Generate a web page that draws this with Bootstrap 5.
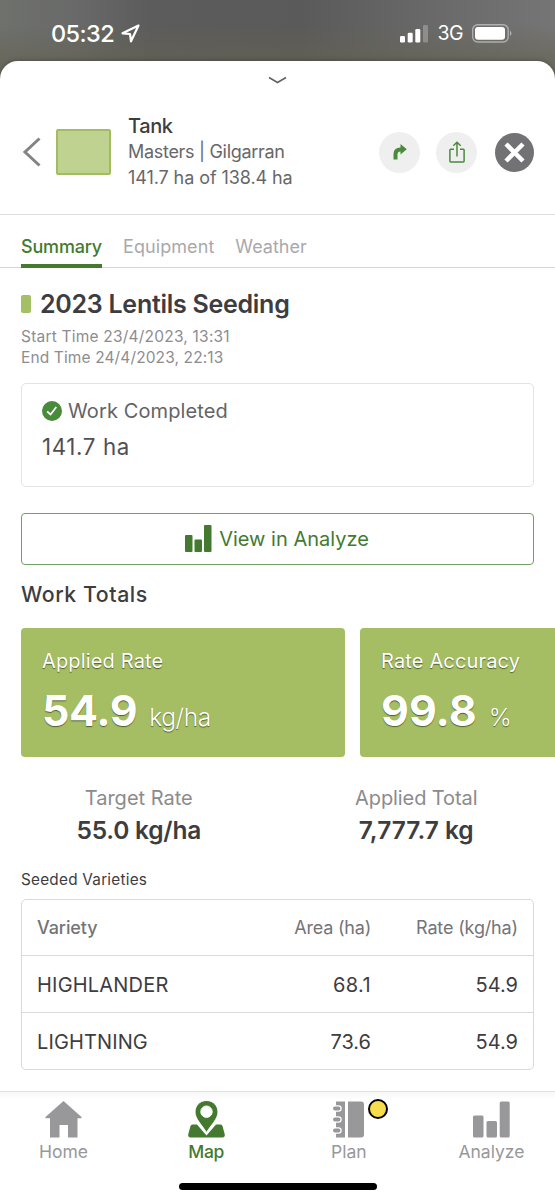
<!DOCTYPE html>
<html lang="en">
<head>
<meta charset="utf-8">
<meta name="viewport" content="width=device-width, initial-scale=1">
<title>Tank</title>
<link href="https://cdn.jsdelivr.net/npm/bootstrap@5.3.0/dist/css/bootstrap.min.css" rel="stylesheet">
<style>
body{font-family:Inter,"Liberation Sans",sans-serif;height:1200px;overflow:hidden;color:#3d3d3f;
background:linear-gradient(180deg,transparent 25px,rgba(100,98,82,.55) 58px),linear-gradient(90deg,#6f716d 0,#696a69 70px,#5c5c5c 150px,#5a5a5a 300px,#6a6a6a 440px,#757575 555px)}
svg{display:block;flex:none}
.t{white-space:nowrap;display:inline-block}
.statusbar{height:61px;padding:6px 42px 0 51px;color:#fff}
.clock{font-size:23.5px;font-weight:500;letter-spacing:-.6px}
.sheet{height:1139px;border-radius:18px 18px 0 0;box-shadow:0 0 5px rgba(0,0,0,.3)}
.grab{height:38px;padding-top:15px}
.head{height:116px;padding:14px 21px 23px 22px;border-bottom:1px solid #dedee0}
.field{width:55px;height:46px;margin-left:15px;background:#bfd290;border:2px solid #a2bd5f;border-radius:2px}
.info{font-size:18px;line-height:26px;color:#67676a;margin-left:17px}
.rnd{width:41px;height:41px;border-radius:50%;background:#efefef}
.tabs{height:53px;padding-left:21px;gap:21px;border-bottom:1px solid #d6d6d8;font-size:18px;color:#a9a9ab}
.tabs>div{height:53px;line-height:63px}
.tabs>.on{color:#437a30;border-bottom:4px solid #437a30;font-weight:500}
.title{font-size:25px;line-height:30px;height:30px;font-weight:600;letter-spacing:-.27px}
.chip{width:10px;height:18px;border-radius:2px;background:#a4bf64}
.times{font-size:15.5px;line-height:21px;color:#8d8d90;margin-top:6.5px}
.done{height:104px;border:1.5px solid #e3e3e5;border-radius:5px;padding:13px 20px;margin-top:15px}
.done-head{height:28px;font-size:20px;color:#636366;letter-spacing:.12px}
.done-val{font-size:22.3px;line-height:28px;margin-top:8px;color:#505053;letter-spacing:.65px}
.go{height:52px;border:1px solid #6fa35f;border-radius:4px;color:#437a30;font-size:20px;margin-top:26px;padding-right:1px}
.totals{font-size:21.3px;line-height:28px;margin-top:15px;font-weight:500;letter-spacing:.55px}
.tiles{margin-top:20px;gap:15px;width:534px;overflow:hidden}
.tile{height:129px;width:324px;flex:none;background:#a5be63;border-radius:4px;color:#fff;padding:20px 21px;text-shadow:0 1px 1px rgba(60,70,30,.8)}
.tile-h{font-size:20px;line-height:26px;letter-spacing:.15px}
.tile-v{line-height:52px;margin-top:10px}
.big{font-size:43px;font-weight:700;letter-spacing:-.4px}
.unit{font-size:24.5px;font-weight:300;letter-spacing:-.4px;margin-left:12px}
.k{font-size:20px;line-height:28px;color:#8b8b8e}
.v{font-size:24.5px;line-height:32px;margin-top:2px;font-weight:600}
.seeded{font-size:15.3px;line-height:22px;letter-spacing:.24px}
.vt{border:1px solid #d9d9db;border-radius:5px;height:171px;margin-top:8px}
.vt>div{height:57px;border-bottom:1px solid #d9d9db;padding:2px 15px 0;font-size:20px}
.vt>div:last-child{border:0}
.vt>.hd{font-size:18px;color:#747477;height:56px;padding-top:1px}
.last-col{width:147px}
.foot{height:109px;border-top:1px solid #e2e2e2;background:linear-gradient(#f7f7f7,#fff 8px);padding:0 13.5px}
.foot .it{width:100px;padding-top:9px;font-size:17.5px;color:#98989a;position:relative}
.foot .on{color:#437a30}
.lab{line-height:22px;margin-top:3px}
.dot{position:absolute;left:69px;top:6.5px;width:20px;height:20px;border-radius:50%;background:#f8dc4c;border:2.5px solid #000}
.homebar{width:198px;height:6.5px;border-radius:4px;background:#000;margin:20px auto 0}
</style>
</head>
<body>
<div class="statusbar d-flex align-items-center">
<span class="t clock">05:32</span>
<svg style="margin-left:7px" width="19" height="19" viewBox="0 0 19 19" fill="none" stroke="#fff" stroke-width="2.2" stroke-linejoin="round"><path d="M17.500 1.500L1.500 9.300L9 10L10 17.300Z"/></svg>
<svg class="ms-auto" width="29" height="18" viewBox="0 0 29 18" fill="#fff"><rect x="0" y="11" width="5" height="6.500" rx="1.300"/><rect x="7.700" y="7.800" width="5" height="9.700" rx="1.300"/><rect x="15.300" y="4" width="5" height="13.500" rx="1.300"/><rect x="23" y="0" width="5" height="17.500" rx="1.300" opacity=".25"/></svg>
<span class="t" style="font-size:19.5px;margin-left:9px;letter-spacing:-.6px;padding-top:1px">3G</span>
<svg style="margin-left:9px" width="41" height="19" viewBox="0 0 41 19"><rect x=".7" y=".7" width="35.500" height="17.300" rx="5" fill="none" stroke="#fff" stroke-opacity=".45" stroke-width="1.400"/><rect x="3" y="3" width="30" height="12.700" rx="3" fill="#fff"/><path d="M38 6.500a3.500 3.500 0 0 1 0 5.500Z" fill="#fff" opacity=".5"/></svg>
</div>
<main class="sheet bg-white d-flex flex-column">
<div class="grab d-flex justify-content-center"><svg width="19" height="9" viewBox="0 0 19 9" fill="none" stroke="#636363" stroke-width="1.700"><path d="M1 1.500L9.500 6.500L18 1.500"/></svg></div>
<header class="head d-flex align-items-center">
<svg width="19" height="30" viewBox="0 0 19 30" fill="none" stroke="#848484" stroke-width="3"><path d="M17.500 1.500L3 15L17.500 28.500"/></svg>
<div class="field"></div>
<div class="info d-flex flex-column align-items-start">
<span class="t" style="font-size:20px;color:#3d3d3f;font-weight:500;letter-spacing:-.4px">Tank</span>
<span class="t" style="letter-spacing:-.3px">Masters | Gilgarran</span>
<span class="t" style="letter-spacing:-.08px">141.7 ha of 138.4 ha</span></div>
<div class="rnd ms-auto d-flex align-items-center justify-content-center"><svg width="14" height="16" viewBox="0 0 14 16" fill="#4a8a3c"><path d="M.5 15.500V10Q.5 3.500 7.500 3.500V0L13.800 5.300L7.500 10.500V7.500Q4.500 7.500 4.500 10.500V15.500Z"/></svg></div>
<div class="rnd d-flex align-items-center justify-content-center" style="margin-left:16px"><svg width="16" height="22" viewBox="0 0 16 22" fill="none" stroke="#4a8a3c" stroke-width="1.500"><path d="M5 8.300H1.700Q.9 8.300 .9 9.100V20Q.9 20.900 1.700 20.900H14.300Q15.100 20.900 15.100 20V9.100Q15.100 8.300 14.300 8.300H11M8 15.500V1.500M4.300 4.800L8 1.300L11.700 4.800"/></svg></div>
<svg style="margin-left:18px" width="39" height="39" viewBox="0 0 39 39"><circle cx="19.500" cy="19.500" r="19.500" fill="#727274"/><path d="M11 11L28 28M28 11L11 28" stroke="#fff" stroke-width="4.500"/></svg>
</header>
<nav class="tabs d-flex"><div class="on"><span class="t" style="letter-spacing:-.17px">Summary</span></div><div><span class="t" style="letter-spacing:.07px">Equipment</span></div><div><span class="t">Weather</span></div></nav>
<section style="padding:21px 21px 0">
<div class="title d-flex align-items-center"><span class="chip"></span><span class="t" style="margin-left:9px">2023 Lentils Seeding</span></div>
<div class="times d-flex flex-column align-items-start"><span class="t" style="letter-spacing:.21px">Start Time 23/4/2023, 13:31</span><span class="t" style="letter-spacing:.12px">End Time 24/4/2023, 22:13</span></div>
<div class="done">
<div class="done-head d-flex align-items-center"><svg width="20" height="20" viewBox="0 0 20 20"><circle cx="10" cy="10" r="10" fill="#4a8a3c"/><path d="M5.200 10.500L8.600 13.500L14.300 6" fill="none" stroke="#fff" stroke-width="1.700"/></svg><span class="t" style="margin-left:6px">Work Completed</span></div>
<div class="done-val"><span class="t">141.7 ha</span></div></div>
<div class="go d-flex align-items-center justify-content-center"><svg width="27" height="27" viewBox="0 0 27 27" fill="#437a30"><rect y="10" width="7.500" height="17" rx="1"/><rect x="9.500" y="14.500" width="7.500" height="12.500" rx="1"/><rect x="19" width="7.500" height="27" rx="1"/></svg><span class="t" style="margin-left:7px">View in Analyze</span></div>
<div class="totals"><span class="t">Work Totals</span></div>
<div class="tiles d-flex">
<div class="tile"><div class="tile-h"><span class="t">Applied Rate</span></div><div class="tile-v d-flex align-items-baseline"><span class="t big">54.9</span><span class="t unit">kg/ha</span></div></div>
<div class="tile"><div class="tile-h"><span class="t">Rate Accuracy</span></div><div class="tile-v d-flex align-items-baseline"><span class="t big" style="letter-spacing:0">99.8</span><span class="t unit">%</span></div></div>
</div>
</section>
<div class="row g-0 text-center" style="margin-top:27px"><div class="col-6"><div class="k"><span class="t">Target Rate</span></div><div class="v" style="letter-spacing:-.22px"><span class="t">55.0 kg/ha</span></div></div>
<div class="col-6"><div class="k"><span class="t" style="letter-spacing:-.1px">Applied Total</span></div><div class="v"><span class="t">7,777.7 kg</span></div></div></div>
<section style="padding:23px 21px 0"><div class="seeded"><span class="t">Seeded Varieties</span></div>
<div class="vt">
<div class="hd d-flex align-items-center"><span class="t" style="font-weight:500;letter-spacing:-.1px">Variety</span><span class="t ms-auto" style="letter-spacing:-.22px">Area (ha)</span><span class="last-col text-end"><span class="t" style="letter-spacing:-.15px">Rate (kg/ha)</span></span></div>
<div class="d-flex align-items-center"><span class="t" style="letter-spacing:.2px">HIGHLANDER</span><span class="t ms-auto" style="letter-spacing:.4px">68.1</span><span class="last-col text-end"><span class="t">54.9</span></span></div>
<div class="d-flex align-items-center"><span class="t" style="letter-spacing:.12px">LIGHTNING</span><span class="t ms-auto">73.6</span><span class="last-col text-end"><span class="t">54.9</span></span></div>
</div></section>
<footer class="foot mt-auto"><div class="d-flex justify-content-between text-center">
<div class="it"><svg class="mx-auto" width="37" height="37" viewBox="0 0 37 37" fill="currentColor"><path d="M18.500 0L36.500 16V17.300H32.500V36.500H23V24H14.500V36.500H5V17.300H.5V16Z"/></svg><div class="lab"><span class="t">Home</span></div></div>
<div class="it on"><svg class="mx-auto" width="37" height="37" viewBox="0 0 37 37" fill="currentColor"><path d="M4.500 23.500H9L18.500 34.500L28 23.500H32.500Q34 23.500 34.500 25L36.800 33.500Q37 36.500 34.500 36.500H2.500Q0 36.500 .2 33.500L2.500 25Q3 23.500 4.500 23.500Z"/><path fill-rule="evenodd" stroke="#fff" stroke-width="1" d="M18.500-.5C11.500-.5 7 5 7 11C7 18 14 24 18.500 31.500C23 24 30 18 30 11C30 5 25.500-.5 18.500-.5ZM18.500 5A5.700 5.700 0 1 1 18.500 16.400A5.700 5.700 0 0 1 18.500 5Z"/></svg><div class="lab"><span class="t" style="font-weight:500;letter-spacing:-.3px">Map</span></div></div>
<div class="it"><svg class="mx-auto" width="31" height="37" viewBox="0 0 31 37"><path d="M3 .5H12V36.500H3ZM15 .5H28Q31 .5 31 3.500V33.500Q31 36.500 28 36.500H15Z" fill="#98989a"/><g stroke="#fff" stroke-width="6.500" stroke-linecap="round"><path d="M2 7.500H5.500M2 18.500H5.500M2 29.500H5.500"/></g><g stroke="#98989a" stroke-width="4" stroke-linecap="round"><path d="M2 7.500H5.500M2 18.500H5.500M2 29.500H5.500"/></g></svg><span class="dot"></span><div class="lab"><span class="t">Plan</span></div></div>
<div class="it"><svg class="mx-auto" width="37" height="37" viewBox="0 0 37 37" fill="currentColor"><rect x="0" y="14.500" width="10.500" height="22" rx="1.500"/><rect x="13.500" y="20" width="10.500" height="16.500" rx="1.500"/><rect x="26.700" y=".5" width="10" height="36" rx="1.500"/></svg><div class="lab"><span class="t">Analyze</span></div></div>
</div><div class="homebar"></div></footer>
</main>
<script src="https://cdn.jsdelivr.net/npm/bootstrap@5.3.0/dist/js/bootstrap.bundle.min.js"></script>
</body>
</html>
